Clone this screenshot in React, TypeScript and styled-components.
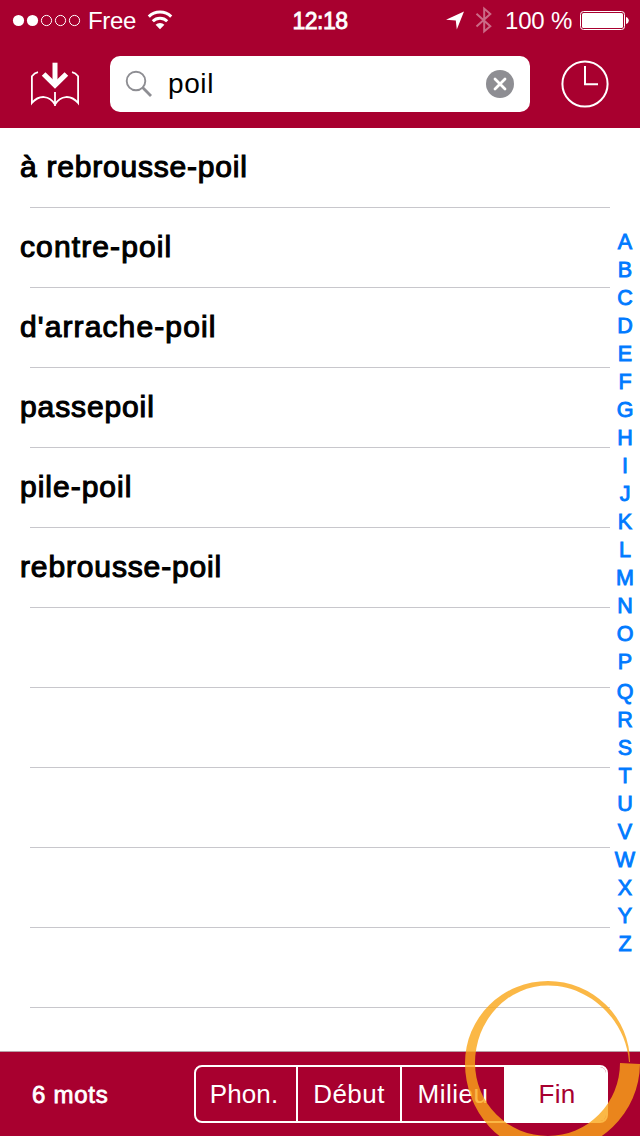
import React from "react";
import styled, { createGlobalStyle } from "styled-components";

const RED = "#a8002f";

const Global = createGlobalStyle`
  *{box-sizing:border-box}
  body{margin:0;background:#fff;font-family:"Liberation Sans",Arial,sans-serif;}
`;

const Screen = styled.div`
  position: relative;
  width: 640px;
  height: 1136px;
  overflow: hidden;
  display: flex;
  flex-direction: column;
  background: #fff;
`;

const Label = styled.span<{ $size: number; $spacing?: number; $stroke?: number; $color?: string }>`
  font-size: ${(p) => p.$size}px;
  letter-spacing: ${(p) => p.$spacing ?? 0}px;
  -webkit-text-stroke: ${(p) => p.$stroke ?? 0}px currentColor;
  color: ${(p) => p.$color ?? "#fff"};
  white-space: nowrap;
  line-height: 1;
`;

const Header = styled.header`
  height: 128px;
  background: ${RED};
  display: flex;
  flex-direction: column;
`;

const StatusBar = styled.div`
  height: 40px;
  display: grid;
  grid-template-columns: 220px 200px 220px;
  align-items: center;
`;

const StatusLeft = styled.div`
  display: flex;
  align-items: center;
  padding-left: 12px;
`;

const StatusCenter = styled.div`
  display: flex;
  justify-content: center;
  padding-top: 2px;
`;

const StatusRight = styled.div`
  display: flex;
  align-items: center;
  justify-content: flex-end;
  padding-right: 11px;
`;

const Icons = styled.div`
  display: flex;
  align-items: center;
  gap: 10px;
`;

const Percent = styled.div`
  display: flex;
  width: 68px;
  margin: 2px 7px 0 12px;
`;

const Carrier = styled.div`
  display: flex;
  width: 50px;
  margin: 2px 9px 0 7px;
`;

const SearchBar = styled.div`
  height: 88px;
  display: flex;
  align-items: center;
  padding: 0 31px 0 30px;
`;

const SearchField = styled.div`
  width: 420px;
  height: 56px;
  margin: 0 31px 0 30px;
  border-radius: 10px;
  background: #fff;
  display: flex;
  align-items: center;
  padding: 0 16px 0 15px;
`;

const Query = styled.div`
  flex: 1;
  display: flex;
  padding-left: 15px;
`;

const Body = styled.main`
  height: 923px;
  display: flex;
  justify-content: space-between;
`;

const List = styled.ul`
  list-style: none;
  margin: 0;
  padding: 0;
  width: 610px;
`;

const Row = styled.li`
  height: 80px;
  display: flex;
  align-items: center;
  padding: 0 0 2px 20px;
  background: linear-gradient(#c8c7cc, #c8c7cc) 30px 79px / 580px 1px no-repeat;
`;

const IndexBar = styled.nav`
  width: 30px;
  padding-top: 101px;
  display: flex;
  flex-direction: column;
`;

const IndexLetter = styled.div<{ $gap: boolean }>`
  height: 28px;
  flex: none;
  margin-top: ${(p) => (p.$gap ? 2 : 0)}px;
  display: flex;
  align-items: center;
  justify-content: center;
`;

const Footer = styled.footer`
  height: 85px;
  background: ${RED};
  border-top: 1px solid #b8a0a8;
  display: flex;
  align-items: center;
  justify-content: space-between;
  padding: 0 32px;
`;

const Count = styled.div`
  display: flex;
  padding-top: 2px;
`;

const Segments = styled.div`
  width: 414px;
  height: 58px;
  border: 2px solid #fff;
  border-radius: 8px;
  display: grid;
  grid-template-columns: 100px 104px 104px 102px;
  overflow: hidden;
`;

const Segment = styled.div<{ $active: boolean; $divided: boolean }>`
  display: flex;
  align-items: center;
  justify-content: center;
  padding: ${(p) => (p.$active ? "0 0 0 4px" : p.$divided ? "0" : "0 4px 0 0")};
  background: ${(p) => (p.$active ? "#fff" : "transparent")};
  border-left: ${(p) => (p.$divided ? "2px solid #fff" : "none")};
`;

const Highlight = styled.svg`
  position: absolute;
  left: 460px;
  top: 976px;
  pointer-events: none;
`;

const rows = [
  { word: "à rebrousse-poil", spacing: 0.78 },
  { word: "contre-poil", spacing: 1.12 },
  { word: "d'arrache-poil", spacing: 1.12 },
  { word: "passepoil", spacing: 0.88 },
  { word: "pile-poil", spacing: 1 },
  { word: "rebrousse-poil", spacing: 0.86 },
  ...Array.from({ length: 5 }, () => ({ word: "", spacing: 0 })),
];

const modes = [
  { name: "Phon.", spacing: 0.1 },
  { name: "Début", spacing: 0.45 },
  { name: "Milieu", spacing: 0.5 },
  { name: "Fin", spacing: 0.3 },
];

const Signal = () => (
  <svg width="69" height="14" viewBox="0 0 69 14">
    {[0, 1, 2, 3, 4].map((i) => (
      <circle key={i} cx={6.5 + i * 14} cy="7.5" r={i < 2 ? 5.6 : 5.1} fill={i < 2 ? "#fff" : "none"} stroke="#fff" strokeWidth={i < 2 ? 0 : 1} />
    ))}
  </svg>
);

const Wifi = () => (
  <svg width="26" height="20" viewBox="0 0 26 20" fill="none" stroke="#fff" strokeWidth="3">
    <path d="M1.8 6.6A15.8 15.8 0 0 1 24.2 6.6" />
    <path d="M5.8 11.2A10.2 10.2 0 0 1 20.2 11.2" />
    <path d="M13 19.2L8.6 14.8A6 6 0 0 1 17.4 14.8Z" fill="#fff" stroke="none" />
  </svg>
);

const LocationArrow = () => (
  <svg width="20" height="20" viewBox="0 0 20 20">
    <path d="M19 1.5L11.8 19.5L10.8 10.6L1 9.8Z" fill="#fff" />
  </svg>
);

const Bluetooth = () => (
  <svg width="18" height="28" viewBox="0 0 18 28" fill="none" stroke="#cb6b87" strokeWidth="2">
    <path d="M1.5 7.7L15.3 20.2L9.2 25.4V2.6L15.3 8L1.5 20.5" />
  </svg>
);

const Battery = () => (
  <svg width="49" height="20" viewBox="0 0 49 20">
    <rect x=".5" y="1.5" width="44" height="18" rx="3" fill="none" stroke="#fff" />
    <rect x="2" y="3" width="41" height="15" rx="1.5" fill="#fff" />
    <path d="M46 7C49.7 8 49.7 13 46 14Z" fill="#fff" />
  </svg>
);

const BookDownload = () => (
  <svg width="50" height="48" viewBox="0 0 50 48" fill="none" stroke="#fff">
    <path d="M8 12.2Q4.5 13 1.9 16.2V43C9 34.6 19.5 35 25 44.5C30.5 35 41 34.6 48.1 43V16.2Q45.5 13 42 12.2M25 32V46" strokeWidth="1.8" />
    <path d="M25 2.7V25" strokeWidth="5" />
    <path d="M13.6 14L25 25.2L36.4 14" strokeWidth="5.2" />
  </svg>
);

const Clock = () => (
  <svg width="48" height="48" viewBox="0 0 48 48" fill="none" stroke="#fff" strokeWidth="2">
    <circle cx="24" cy="24" r="22.6" />
    <path d="M24 6V24.2H37" />
  </svg>
);

const Magnifier = () => (
  <svg width="28" height="28" viewBox="0 0 28 28" fill="none" stroke="#8e8e93">
    <circle cx="11" cy="11" r="9.3" strokeWidth="1.9" />
    <path d="M17.6 17.6L26 26" strokeWidth="2.8" />
  </svg>
);

const Clear = () => (
  <svg width="28" height="28" viewBox="0 0 28 28">
    <circle cx="14" cy="14" r="14" fill="#8e8e93" />
    <path d="M9 9L19 19M19 9L9 19" stroke="#fff" strokeWidth="2.8" strokeLinecap="round" />
  </svg>
);

export default function App() {
  return (
    <Screen>
      <Global />
      <Header>
        <StatusBar>
          <StatusLeft>
            <Signal />
            <Carrier><Label $size={24} $spacing={-0.35}>Free</Label></Carrier>
            <Wifi />
          </StatusLeft>
          <StatusCenter><Label $size={23} $spacing={-0.5} $stroke={0.8}>12:18</Label></StatusCenter>
          <StatusRight>
            <Icons>
              <LocationArrow />
              <Bluetooth />
            </Icons>
            <Percent><Label $size={24} $spacing={-0.2}>100 %</Label></Percent>
            <Battery />
          </StatusRight>
        </StatusBar>
        <SearchBar>
          <BookDownload />
          <SearchField>
            <Magnifier />
            <Query><Label $size={28} $spacing={0.6} $color="#000">poil</Label></Query>
            <Clear />
          </SearchField>
          <Clock />
        </SearchBar>
      </Header>
      <Body>
        <List>
          {rows.map((r, i) => (
            <Row key={i}><Label $size={30} $spacing={r.spacing} $stroke={1.1} $color="#000">{r.word}</Label></Row>
          ))}
        </List>
        <IndexBar>
          {"ABCDEFGHIJKLMNOPQRSTUVWXYZ".split("").map((c) => (
            <IndexLetter key={c} $gap={c === "Q"}>
              <Label $size={21.5} $stroke={0.9} $color="#007aff">{c}</Label>
            </IndexLetter>
          ))}
        </IndexBar>
      </Body>
      <Footer>
        <Count><Label $size={24} $spacing={0.75} $stroke={0.8}>6 mots</Label></Count>
        <Segments>
          {modes.map((m, i) => (
            <Segment key={m.name} $active={m.name === "Fin"} $divided={i === 1 || i === 2}>
              <Label $size={26} $spacing={m.spacing} $color={m.name === "Fin" ? RED : "#fff"}>{m.name}</Label>
            </Segment>
          ))}
        </Segments>
      </Footer>
      <Highlight width="180" height="160" viewBox="460 976 180 160">
        <path
          d="M630 1062A82 81 0 0 0 548 981A83 82 0 0 0 465 1063A83 90 0 0 0 548 1153A92 90 0 0 0 640 1064L620 1063A72 73 0 0 1 548 1136A73 73 0 0 1 475 1063A73 77.5 0 0 1 548 985.5C590 985.5 626 1020 629 1062Z"
          fill="rgb(250,166,24)"
          fillOpacity="0.8"
        />
      </Highlight>
    </Screen>
  );
}
